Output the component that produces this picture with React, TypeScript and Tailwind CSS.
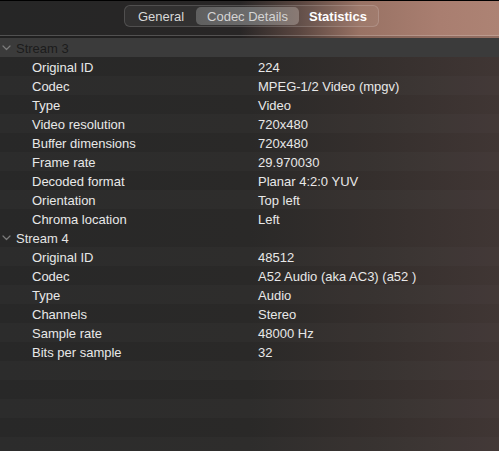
import React from "react";

type Row = { label: string; value: string };

const streams: { name: string; rows: Row[] }[] = [
  {
    name: "Stream 3",
    rows: [
      { label: "Original ID", value: "224" },
      { label: "Codec", value: "MPEG-1/2 Video (mpgv)" },
      { label: "Type", value: "Video" },
      { label: "Video resolution", value: "720x480" },
      { label: "Buffer dimensions", value: "720x480" },
      { label: "Frame rate", value: "29.970030" },
      { label: "Decoded format", value: "Planar 4:2:0 YUV" },
      { label: "Orientation", value: "Top left" },
      { label: "Chroma location", value: "Left" },
    ],
  },
  {
    name: "Stream 4",
    rows: [
      { label: "Original ID", value: "48512" },
      { label: "Codec", value: "A52 Audio (aka AC3) (a52 )" },
      { label: "Type", value: "Audio" },
      { label: "Channels", value: "Stereo" },
      { label: "Sample rate", value: "48000 Hz" },
      { label: "Bits per sample", value: "32" },
    ],
  },
];

function Chevron({ className }: { className?: string }) {
  return (
    <svg width="9" height="6" viewBox="0 0 9 6" className={className}>
      <path d="M1 1 L4.5 4.5 L8 1" fill="none" stroke="currentColor" strokeWidth="1.2" strokeLinecap="round" strokeLinejoin="round" />
    </svg>
  );
}

function Toolbar() {
  return (
    <div className="h-[37px] shrink-0 flex flex-col bg-[linear-gradient(to_right,#262626_0%,#282626_48%,#5a4640_60%,#987264_72%,#a97e70_88%,#ad8374_100%)]">
      <div className="h-[34px] flex items-start justify-center pt-[4px] pr-[1px]">
        <div className="ml-[5px] flex items-center h-[22px] rounded-[6px] border border-white/15 bg-white/[0.05] p-[1px] text-[13px] text-[#d8d8d8]">
          <div className="w-[70px] h-full flex items-center justify-center">General</div>
          <div className="w-[103px] h-full flex items-center justify-center rounded-[5px] bg-[linear-gradient(to_right,#5f5f5f,#6c6c6c_55%,#8a7a74)] text-[#d4d4d4]">
            Codec Details
          </div>
          <div className="w-[78px] h-full flex items-center justify-center font-bold text-white">Statistics</div>
        </div>
      </div>
      <div className="h-px bg-white/20" />
      <div className="flex-1 bg-black/15" />
    </div>
  );
}

export default function App() {
  let stripe = 0;
  const lines: React.ReactNode[] = [];
  streams.forEach((s, si) => {
    lines.push(
      <div
        key={s.name}
        className={
          si === 0
            ? "h-[19px] shrink-0 flex items-center pt-px bg-[#3b3b3b] text-[#1c1c1c]"
            : "h-[19px] shrink-0 flex items-center pt-px text-[#e4e4e4]"
        }
      >
        <Chevron className="ml-[2px] w-[9px] text-[#7c7c7c]" />
        <span className="ml-[5px]">{s.name}</span>
      </div>
    );
    s.rows.forEach((r) => {
      stripe++;
      lines.push(
        <div
          key={s.name + r.label}
          className={`h-[19px] shrink-0 flex items-center pt-px text-[#e8e8e8] ${stripe % 2 === 0 ? "bg-white/[0.02]" : ""}`}
        >
          <span className="pl-[32px] w-[258px] shrink-0">{r.label}</span>
          <span>{r.value}</span>
        </div>
      );
    });
  });
  for (let i = 0; i < 5; i++) {
    stripe++;
    lines.push(<div key={"empty" + i} className={`h-[19px] shrink-0 ${stripe % 2 === 0 ? "bg-white/[0.02]" : ""}`} />);
  }

  return (
    <div
      className="w-[499px] h-[451px] overflow-hidden flex flex-col border-t border-black bg-[linear-gradient(to_right,#282828_0%,#2a2928_50%,#352f2d_75%,#403634_100%)] text-[13px] leading-none"
      style={{ fontFamily: '"Liberation Sans", Arial, sans-serif' }}
    >
      <Toolbar />
      <div className="flex flex-col shrink-0">{lines}</div>
    </div>
  );
}
